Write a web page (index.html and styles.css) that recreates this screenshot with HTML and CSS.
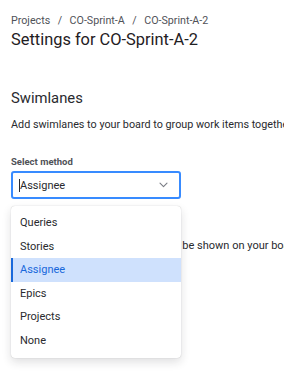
FILE: index.html
```html
<!DOCTYPE html>
<html lang="en">
<head>
  <meta charset="UTF-8">
  <meta name="viewport" content="width=device-width, initial-scale=1.0">
  <title>Settings for CO-Sprint-A-2</title>
  <link rel="stylesheet" href="styles.css">
</head>
<body>
  <div class="page">
    <nav class="crumbs">
      <span>Projects</span><span class="sep">/</span><span>CO-Sprint-A</span><span class="sep">/</span><span>CO-Sprint-A-2</span>
    </nav>
    <h1 class="title">Settings for CO-Sprint-A-2</h1>

    <section class="swimlanes">
      <h2>Swimlanes</h2>
      <p class="desc">Add swimlanes to your board to group work items together by assignee, epic or query.</p>

      <label class="label">Select method</label>
      <div class="select-wrap">
        <div class="select">
          <span class="caret"></span><span>Assignee</span>
          <svg class="chev" width="9" height="6" viewBox="0 0 9 6"><path d="M1 1.2l3.5 3.5 3.5-3.5" fill="none" stroke="#7a7d85" stroke-width="1.1" stroke-linecap="round" stroke-linejoin="round"/></svg>
        </div>

        <!-- Dropdown menu -->
        <ul class="menu">
          <li>Queries</li>
          <li>Stories</li>
          <li class="active">Assignee</li>
          <li>Epics</li>
          <li>Projects</li>
          <li>None</li>
        </ul>
      </div>

      <p class="hint">Choose how all the work items will be shown on your board.</p>
    </section>
  </div>
</body>
</html>
```

FILE: styles.css
```css
* {
  margin: 0;
  padding: 0;
  box-sizing: border-box;
}

html, body {
  height: 100%;
}

body {
  font-family: Roboto, "Noto Sans", sans-serif;
  color: #292a2e;
  background: #fff;
}

.page {
  height: 100%;
  overflow: hidden;
  padding: 14px 0 0 11px;
  white-space: nowrap;
}

/* Breadcrumb */
.crumbs {
  font-size: 10.7px;
  line-height: 14px;
  color: #505258;
}

.crumbs .sep {
  margin: 0 7.5px;
}

.title {
  font-size: 16.4px;
  font-weight: 400;
  line-height: 24px;
  color: #1f2023;
}

/* Swimlanes section */
.swimlanes h2 {
  font-size: 14.8px;
  font-weight: 400;
  line-height: 20px;
  margin-top: 36px;
}

.desc {
  font-size: 10.8px;
  line-height: 14px;
  margin-top: 10px;
}

.label {
  display: block;
  font-size: 9.5px;
  font-weight: 700;
  line-height: 12px;
  color: #505258;
  margin-top: 23.5px;
}

.select-wrap {
  position: relative;
  width: 170px;
  margin-top: 3.5px;
}

.select {
  display: flex;
  align-items: center;
  height: 28px;
  padding: 0 11px 0 6px;
  border: 2px solid #388bff;
  border-radius: 3px;
  font-size: 11px;
}

.caret {
  width: 1px;
  height: 13px;
  background: #292a2e;
}

.chev {
  margin-left: auto;
}

.menu {
  position: absolute;
  top: 35px;
  left: 0;
  width: 170px;
  list-style: none;
  background: #fff;
  border-radius: 4px;
  padding: 5px 0;
  box-shadow: 0 4px 10px rgba(30, 31, 33, 0.14), 0 0 1px rgba(30, 31, 33, 0.3);
  z-index: 10;
}

.menu li {
  height: 23.6px;
  line-height: 23.6px;
  padding-left: 9px;
  font-size: 11px;
  color: #292a2e;
}

.menu li.active {
  background: #cfe1fd;
  color: #1868db;
  box-shadow: inset 2px 0 0 #1868db;
}

.hint {
  font-size: 11px;
  line-height: 14px;
  margin-top: 40px;
}
```
